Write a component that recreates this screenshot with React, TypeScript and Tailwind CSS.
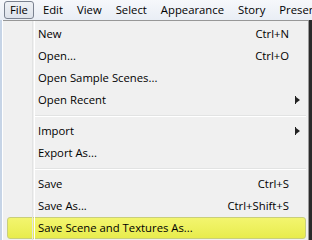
import { ReactNode } from 'react';

type Item =
  | { kind: 'item'; label: string; shortcut?: string; submenu?: boolean; active?: boolean }
  | { kind: 'sep' };

const items: Item[] = [
  { kind: 'item', label: 'New', shortcut: 'Ctrl+N' },
  { kind: 'item', label: 'Open...', shortcut: 'Ctrl+O' },
  { kind: 'item', label: 'Open Sample Scenes...' },
  { kind: 'item', label: 'Open Recent', submenu: true },
  { kind: 'sep' },
  { kind: 'item', label: 'Import', submenu: true },
  { kind: 'item', label: 'Export As...' },
  { kind: 'sep' },
  { kind: 'item', label: 'Save', shortcut: 'Ctrl+S' },
  { kind: 'item', label: 'Save As...', shortcut: 'Ctrl+Shift+S' },
  { kind: 'item', label: 'Save Scene and Textures As...', active: true },
];

const menus = ['File', 'Edit', 'View', 'Select', 'Appearance', 'Story', 'Presentation'];

function Arrow() {
  return (
    <svg width="5" height="8" viewBox="0 0 5 8" className="block">
      <path d="M0 0h1v8H0zM1 1l4 3-4 3z" fill="#222" />
    </svg>
  );
}

function Row({ children, active }: { children: ReactNode; active?: boolean }) {
  return (
    <div className="h-[22px] flex items-center pl-[4px] pr-[2px]">
      <div
        className={
          'flex-1 h-[22px] flex items-center rounded-[3px] border ' +
          (active
            ? 'bg-gradient-to-b from-[#f3f56e] to-[#e8ec4c] border-[#c9cf7a]'
            : 'border-transparent')
        }
      >
        {children}
      </div>
    </div>
  );
}

export default function App() {
  return (
    <div
      className="w-[312px] h-[240px] overflow-hidden bg-[#f0f0f0] text-[11.3px] text-black"
      style={{ fontFamily: '"Open Sans", "Noto Sans", sans-serif' }}
    >
      {/* menu bar */}
      <div className="h-[20px] flex items-center bg-gradient-to-b from-[#f6f8fb] to-[#e9eef5] whitespace-nowrap">
        {menus.map((m, i) => (
          <div
            key={m}
            className={
              'h-[18px] flex items-center leading-none shrink-0 ' +
              (i === 0
                ? 'ml-[4px] mr-[2px] px-[5px] border border-[#7a8290] rounded-[3px] bg-gradient-to-b from-[#eef1f5] to-[#dde2ea]'
                : 'px-[7px]')
            }
          >
            {m}
          </div>
        ))}
      </div>

      {/* dropdown */}
      <div className="flex h-[220px]">
        <div className="w-[3px] bg-[#c6d4e6] border-r border-white" />
        <div className="w-[305px] relative bg-[#f0f0f0] border-t border-[#979797] pt-[2px]">
          <div className="absolute left-[29px] top-0 bottom-0 w-[2px] border-l border-[#e2e3e3] shadow-[1px_0_0_#ffffff]" />
          {items.map((it, i) =>
            it.kind === 'sep' ? (
              <div key={i} className="h-[9px] flex items-center pl-[31px] pr-[2px]">
                <div className="flex-1 h-[2px] border-t border-[#e2e3e3] border-b border-b-white" />
              </div>
            ) : (
              <Row key={i} active={it.active}>
                <span className="pl-[30px] flex-1 leading-none">{it.label}</span>
                {it.shortcut && <span className="pr-[16px] leading-none">{it.shortcut}</span>}
                {it.submenu && (
                  <span className="pr-[5px]">
                    <Arrow />
                  </span>
                )}
              </Row>
            )
          )}
        </div>
        <div className="w-[4px] bg-[#2a2a2a] border-l border-[#9a9a9a]" />
      </div>
    </div>
  );
}
